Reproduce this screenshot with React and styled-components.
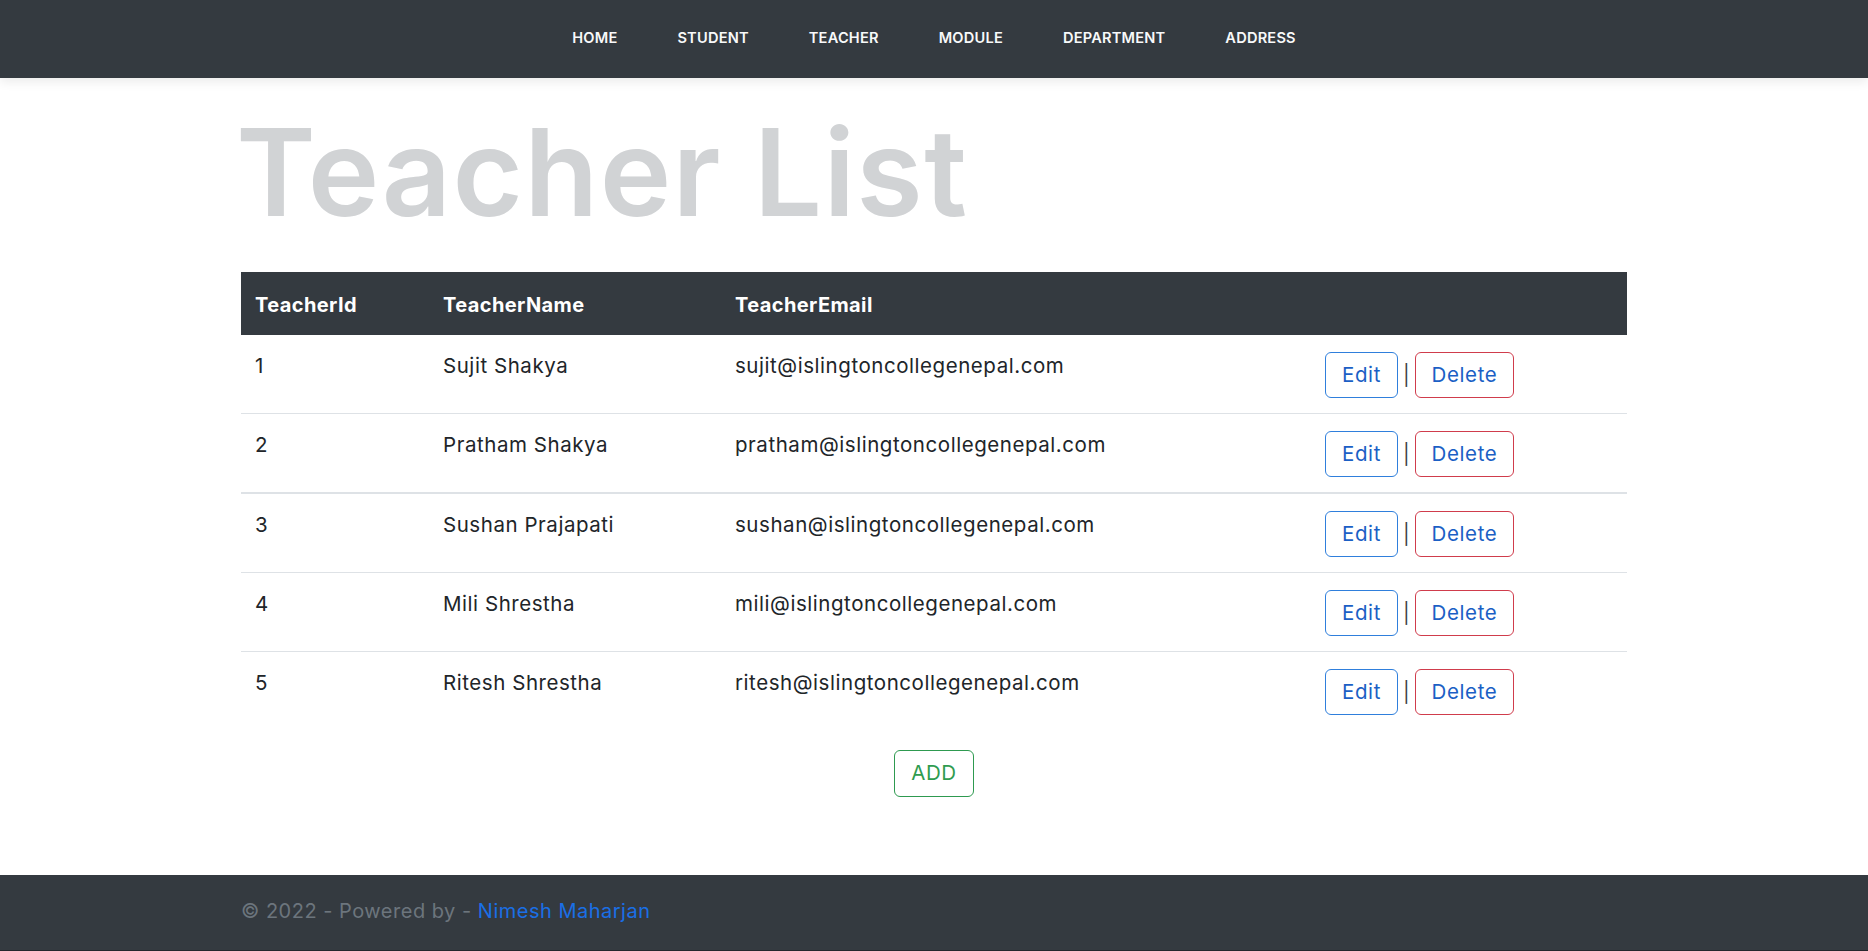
import React from "react";
import styled, { createGlobalStyle } from "styled-components";

const GlobalStyle = createGlobalStyle`
  body {
    margin: 0;
    background: #ffffff;
    font-family: "Inter", "Liberation Sans", sans-serif;
    color: #212529;
  }
`;

const teachers = [
  { id: 1, name: "Sujit Shakya", email: "sujit@islingtoncollegenepal.com" },
  { id: 2, name: "Pratham Shakya", email: "pratham@islingtoncollegenepal.com" },
  { id: 3, name: "Sushan Prajapati", email: "sushan@islingtoncollegenepal.com" },
  { id: 4, name: "Mili Shrestha", email: "mili@islingtoncollegenepal.com" },
  { id: 5, name: "Ritesh Shrestha", email: "ritesh@islingtoncollegenepal.com" },
];

const links = ["Home", "Student", "Teacher", "Module", "Department", "Address"];

const Page = styled.div`
  display: flex;
  flex-direction: column;
  min-height: 100vh;
`;

const NavBar = styled.nav`
  height: 78px;
  background: #343a40;
  display: flex;
  justify-content: center;
  align-items: center;
  box-shadow: 0 4px 10px rgba(0, 0, 0, 0.08);
  position: relative;
  z-index: 1;
`;

const NavList = styled.ul`
  display: flex;
  list-style: none;
  margin: 0;
  padding: 0 0 3px;
`;

const NavLink = styled.li`
  padding: 0 30px;
  color: #f8f9fa;
  font-size: 14.6px;
  font-weight: 600;
  text-transform: uppercase;
  letter-spacing: 0.2px;
`;

const Main = styled.main`
  width: 1386px;
  margin: 0 auto;
  flex: 1;
`;

const Title = styled.h1`
  margin: 34px 0 0 -5px;
  font-size: 121px;
  line-height: 1;
  font-weight: 600;
  color: #d1d3d5;
  letter-spacing: 1.3px;
`;

const Table = styled.table`
  width: 100%;
  margin-top: 39px;
  border-collapse: collapse;
  table-layout: fixed;
`;

const HeadRow = styled.tr`
  background: #343a40;
  height: 63px;
`;

const HeadCell = styled.th`
  text-align: left;
  padding: 3px 14px 0;
  color: #ffffff;
  font-size: 20px;
  font-weight: 700;
  letter-spacing: 0.4px;
`;

const Row = styled.tr`
  border-bottom: ${(p) => (p.$last ? "none" : `${p.$thick ? 2 : 1}px solid #dee2e6`)};
`;

const Cell = styled.td`
  vertical-align: top;
  padding: 16px 14px 16px;
  font-size: 20.5px;
  line-height: 30px;
  color: #212529;
  letter-spacing: 0.55px;
`;

const ActionCell = styled(Cell)`
  padding-top: 17px;
  padding-bottom: 15px;
  white-space: nowrap;
  letter-spacing: 0;
`;

const OutlineButton = styled.a`
  display: inline-block;
  box-sizing: border-box;
  height: ${(p) => (p.$big ? 47 : 46)}px;
  padding: 7px ${(p) => p.$px}px;
  border: 1px solid ${(p) => p.$border};
  border-radius: 6px;
  color: ${(p) => p.$color || "#1b5fc5"};
  font-size: 20.5px;
  line-height: 30px;
  letter-spacing: 0.6px;
  text-decoration: none;
  vertical-align: middle;
  background: #fff;
`;

const Divider = styled.span`
  display: inline-block;
  margin: 0 5px;
  color: #3c4046;
  font-size: 20px;
  vertical-align: middle;
`;

const AddWrap = styled.div`
  display: flex;
  justify-content: center;
  margin-top: 20px;
  padding-bottom: 78px;
`;

const Footer = styled.footer`
  background: #343a40;
  height: 75px;
  border-bottom: 2px solid #24282c;
`;

const FooterInner = styled.div`
  width: 1386px;
  margin: 0 auto;
  padding-top: 24px;
  font-size: 20px;
  color: #6c757d;
  letter-spacing: 0.5px;
`;

const FooterLink = styled.a`
  color: #1a6fe6;
  text-decoration: none;
`;

export default function App() {
  return (
    <Page>
      <GlobalStyle />
      <NavBar>
        <NavList>
          {links.map((l) => (
            <NavLink key={l}>{l}</NavLink>
          ))}
        </NavList>
      </NavBar>
      <Main>
        <Title>Teacher List</Title>
        <Table>
          <colgroup>
            <col style={{ width: 188 }} />
            <col style={{ width: 292 }} />
            <col style={{ width: 590 }} />
            <col />
          </colgroup>
          <thead>
            <HeadRow>
              <HeadCell>TeacherId</HeadCell>
              <HeadCell>TeacherName</HeadCell>
              <HeadCell>TeacherEmail</HeadCell>
              <HeadCell />
            </HeadRow>
          </thead>
          <tbody>
            {teachers.map((t, i) => (
              <Row key={t.id} $thick={i === 1} $last={i === teachers.length - 1}>
                <Cell>{t.id}</Cell>
                <Cell>{t.name}</Cell>
                <Cell>{t.email}</Cell>
                <ActionCell>
                  <OutlineButton href="#" $border="#2f7fdc" $px={16}>
                    Edit
                  </OutlineButton>
                  <Divider>|</Divider>
                  <OutlineButton href="#" $border="#d03c4c" $px={16}>
                    Delete
                  </OutlineButton>
                </ActionCell>
              </Row>
            ))}
          </tbody>
        </Table>
        <AddWrap>
          <OutlineButton href="#" $border="#2e9a50" $color="#2f9c4f" $px={16} $big>
            ADD
          </OutlineButton>
        </AddWrap>
      </Main>
      <Footer>
        <FooterInner>
          © 2022 - Powered by - <FooterLink href="#">Nimesh Maharjan</FooterLink>
        </FooterInner>
      </Footer>
    </Page>
  );
}
